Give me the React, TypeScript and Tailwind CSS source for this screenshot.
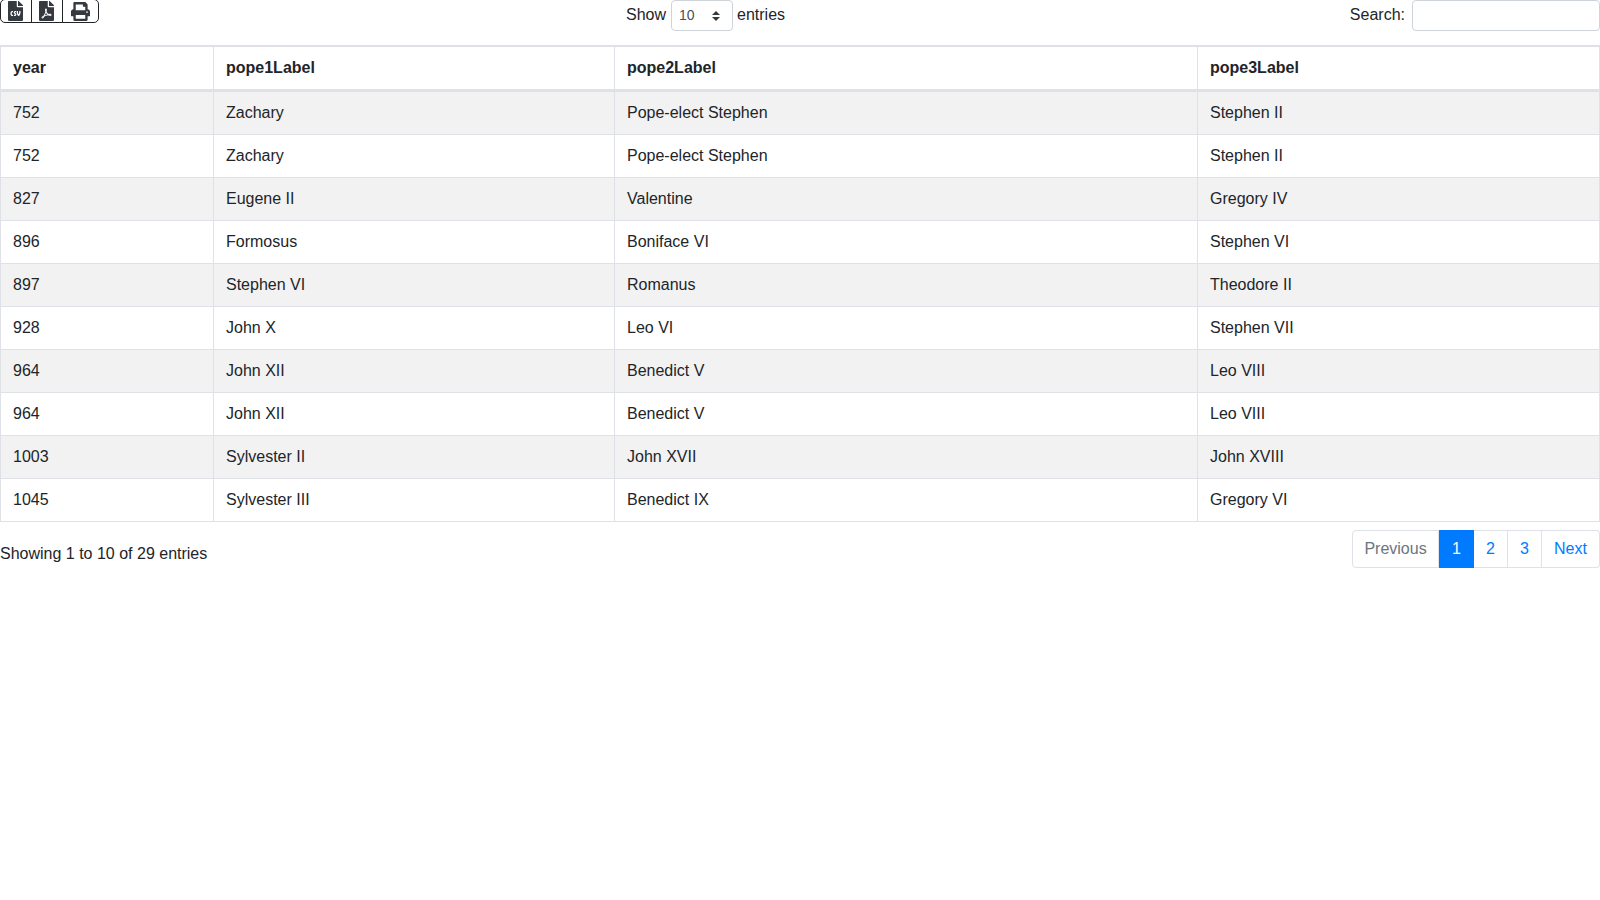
import { FaFileCsv, FaFilePdf, FaPrint } from "react-icons/fa";

const rows = [
  ["752", "Zachary", "Pope-elect Stephen", "Stephen II"],
  ["752", "Zachary", "Pope-elect Stephen", "Stephen II"],
  ["827", "Eugene II", "Valentine", "Gregory IV"],
  ["896", "Formosus", "Boniface VI", "Stephen VI"],
  ["897", "Stephen VI", "Romanus", "Theodore II"],
  ["928", "John X", "Leo VI", "Stephen VII"],
  ["964", "John XII", "Benedict V", "Leo VIII"],
  ["964", "John XII", "Benedict V", "Leo VIII"],
  ["1003", "Sylvester II", "John XVII", "John XVIII"],
  ["1045", "Sylvester III", "Benedict IX", "Gregory VI"],
];

const headers = ["year", "pope1Label", "pope2Label", "pope3Label"];

const App = () => {
  return (
    <div className="min-h-[900px] bg-white font-['Liberation_Sans',Arial,sans-serif] text-base leading-[18px] text-[#212529]">
      <div className="flex h-[45px] items-start">
        <div className="-mt-px flex h-[24px] w-[99px] items-center overflow-hidden rounded-[5px] border border-[#212529]">
          <div className="flex h-full w-[31px] items-center justify-center border-r border-[#212529] pr-[1px]">
            <FaFileCsv className="h-[20px] w-[15px] text-[#343a40]" />
          </div>
          <div className="flex h-full w-[31px] items-center justify-center border-r border-[#212529] pr-[2px]">
            <FaFilePdf className="h-[20px] w-[15px] text-[#343a40]" />
          </div>
          <div className="flex h-full flex-1 items-center justify-center pr-[1px]">
            <FaPrint className="size-[19px] text-[#343a40]" />
          </div>
        </div>
        <div className="ml-[527px] flex h-[30px] items-center">
          <span>Show</span>
          <div className="relative ml-[5px] flex h-[31px] w-[62px] items-center rounded-[4px] border border-[#ced4da] pl-[7px] text-sm text-[#495057]">
            10
            <svg className="absolute right-[11px] top-[9px]" width="10" height="12" viewBox="0 0 10 12">
              <path d="M5 1 L9 5 H1 Z M5 11 L9 7 H1 Z" fill="#343a40" />
            </svg>
          </div>
          <span className="ml-[4px]">entries</span>
        </div>
        <div className="ml-auto flex h-[30px] items-center gap-[7px]">
          <span>Search:</span>
          <input className="h-[31px] w-[188px] rounded-[4px] border border-[#ced4da] bg-white" />
        </div>
      </div>

      <table className="w-[1600px] table-fixed border-separate border-spacing-0 border border-l-0 border-[#dee2e6]">
        <colgroup>
          <col className="w-[213px]" />
          <col className="w-[401px]" />
          <col className="w-[583px]" />
          <col className="w-[402px]" />
        </colgroup>
        <thead>
          <tr>
            {headers.map((h) => (
              <th key={h} className="border-t border-b-2 border-l border-[#dee2e6] p-3 text-left font-bold">
                {h}
              </th>
            ))}
          </tr>
        </thead>
        <tbody>
          {rows.map((row, idx) => (
            <tr key={idx} className={idx % 2 === 0 ? "bg-[#f2f2f2]" : "bg-white"}>
              {row.map((cell, i) => (
                <td key={i} className="border-t border-l border-[#dee2e6] p-3">
                  {cell}
                </td>
              ))}
            </tr>
          ))}
        </tbody>
      </table>

      <div className="mt-[8px] flex items-start justify-between">
        <div className="pt-[15px]">Showing 1 to 10 of 29 entries</div>
        <div className="flex h-[38px] items-stretch">
          <div className="flex w-[87px] items-center justify-center rounded-l-[4px] border border-[#dee2e6] text-[#6c757d]">
            Previous
          </div>
          <div className="flex w-[35px] items-center justify-center bg-[#007bff] text-white">1</div>
          <div className="flex w-[34px] items-center justify-center border border-l-0 border-[#dee2e6] text-[#007bff]">2</div>
          <div className="flex w-[34px] items-center justify-center border border-l-0 border-[#dee2e6] text-[#007bff]">3</div>
          <div className="flex w-[58px] items-center justify-center rounded-r-[4px] border border-l-0 border-[#dee2e6] text-[#007bff]">
            Next
          </div>
        </div>
      </div>
    </div>
  );
};

export default App;
